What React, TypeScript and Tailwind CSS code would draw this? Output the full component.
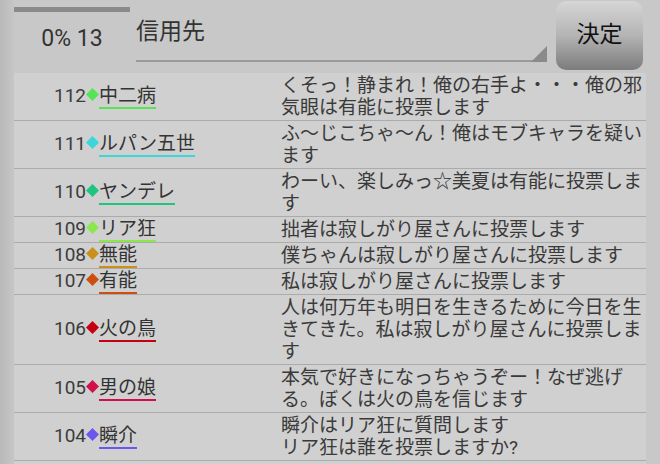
import React from 'react';

type Vote = {
  no: number;
  name: string;
  color: string;
  text: string;
};

const votes: Vote[] = [
  { no: 112, name: '中二病', color: '#55e455', text: 'くそっ！静まれ！俺の右手よ・・・俺の邪気眼は有能に投票します' },
  { no: 111, name: 'ルパン五世', color: '#3ad6d8', text: 'ふ〜じこちゃ〜ん！俺はモブキャラを疑います' },
  { no: 110, name: 'ヤンデレ', color: '#1ec57f', text: 'わーい、楽しみっ☆美夏は有能に投票します' },
  { no: 109, name: 'リア狂', color: '#8ae84a', text: '拙者は寂しがり屋さんに投票します' },
  { no: 108, name: '無能', color: '#c9911c', text: '僕ちゃんは寂しがり屋さんに投票します' },
  { no: 107, name: '有能', color: '#cc4f0f', text: '私は寂しがり屋さんに投票します' },
  {
    no: 106,
    name: '火の鳥',
    color: '#c40012',
    text: '人は何万年も明日を生きるために今日を生きてきた。私は寂しがり屋さんに投票します',
  },
  { no: 105, name: '男の娘', color: '#d10f4b', text: '本気で好きになっちゃうぞー！なぜ逃げる。ぼくは火の鳥を信じます' },
  { no: 104, name: '瞬介', color: '#6a58ee', text: '瞬介はリア狂に質問します\nリア狂は誰を投票しますか?' },
];

const font = { fontFamily: 'Roboto, "Noto Sans CJK JP", sans-serif' };

function Diamond({ color }: { color: string }) {
  return (
    <svg width="13" height="13" viewBox="0 0 13 13" className="self-start mt-[3px] shrink-0">
      <polygon points="6.5,0 13,6.5 6.5,13 0,6.5" fill={color} />
    </svg>
  );
}

function VoteRow({ vote }: { vote: Vote }) {
  return (
    <div className="flex border-b border-[#ababab]">
      <div className="w-[267px] shrink-0 flex items-center pl-[40px]">
        <div className="flex items-baseline text-[19px] leading-[22px]">
          <span className="text-[#3c3c3c]">{vote.no}</span>
          <Diamond color={vote.color} />
          <span className="inline-block text-[#333] border-b-2" style={{ borderColor: vote.color }}>
            {vote.name}
          </span>
        </div>
      </div>
      <div className="flex-1 pt-[2px] pb-[1px] text-[19px] leading-[22px] text-[#3a3a3a] whitespace-pre-line">
        {vote.text}
      </div>
    </div>
  );
}

export default function App() {
  return (
    <div className="w-[660px] h-[464px] overflow-hidden flex bg-[#c8c8c8]" style={font}>
      <div className="w-[14px] shrink-0 bg-gradient-to-r from-[#b9b9b9] to-[#c6c6c6]" />
      <div className="w-[632px] shrink-0 flex flex-col">
        <div className="h-[73px] shrink-0 flex">
          <div className="w-[116px] shrink-0 pt-[7px]">
            <div className="h-[5px] bg-[#8a8a8a]" />
            <div className="mt-[15px] text-center text-[23px] leading-[23px] text-[#333]">0% 13</div>
          </div>
          <div className="relative ml-[6px] w-[411px] h-[62px] border-b-2 border-[#9a9a9a]">
            <div className="pt-[20px] text-[23px] leading-[23px] text-[#333]">信用先</div>
            <svg width="16" height="16" viewBox="0 0 16 16" className="absolute right-0 -bottom-[2px]">
              <polygon points="16,0 16,16 0,16" fill="#8a8a8a" />
            </svg>
          </div>
          <button className="ml-[9px] mt-[1px] w-[87px] h-[69px] rounded-[10px] bg-gradient-to-b from-[#d6d6d6] via-[#b4b4b4] to-[#7c7c7c] flex items-center justify-center text-[23px] text-[#111]">
            決定
          </button>
        </div>
        <div className="flex-1 bg-[#d0d0d0]">
          {votes.map((v) => (
            <VoteRow key={v.no} vote={v} />
          ))}
        </div>
      </div>
      <div className="w-[14px] shrink-0" />
    </div>
  );
}
